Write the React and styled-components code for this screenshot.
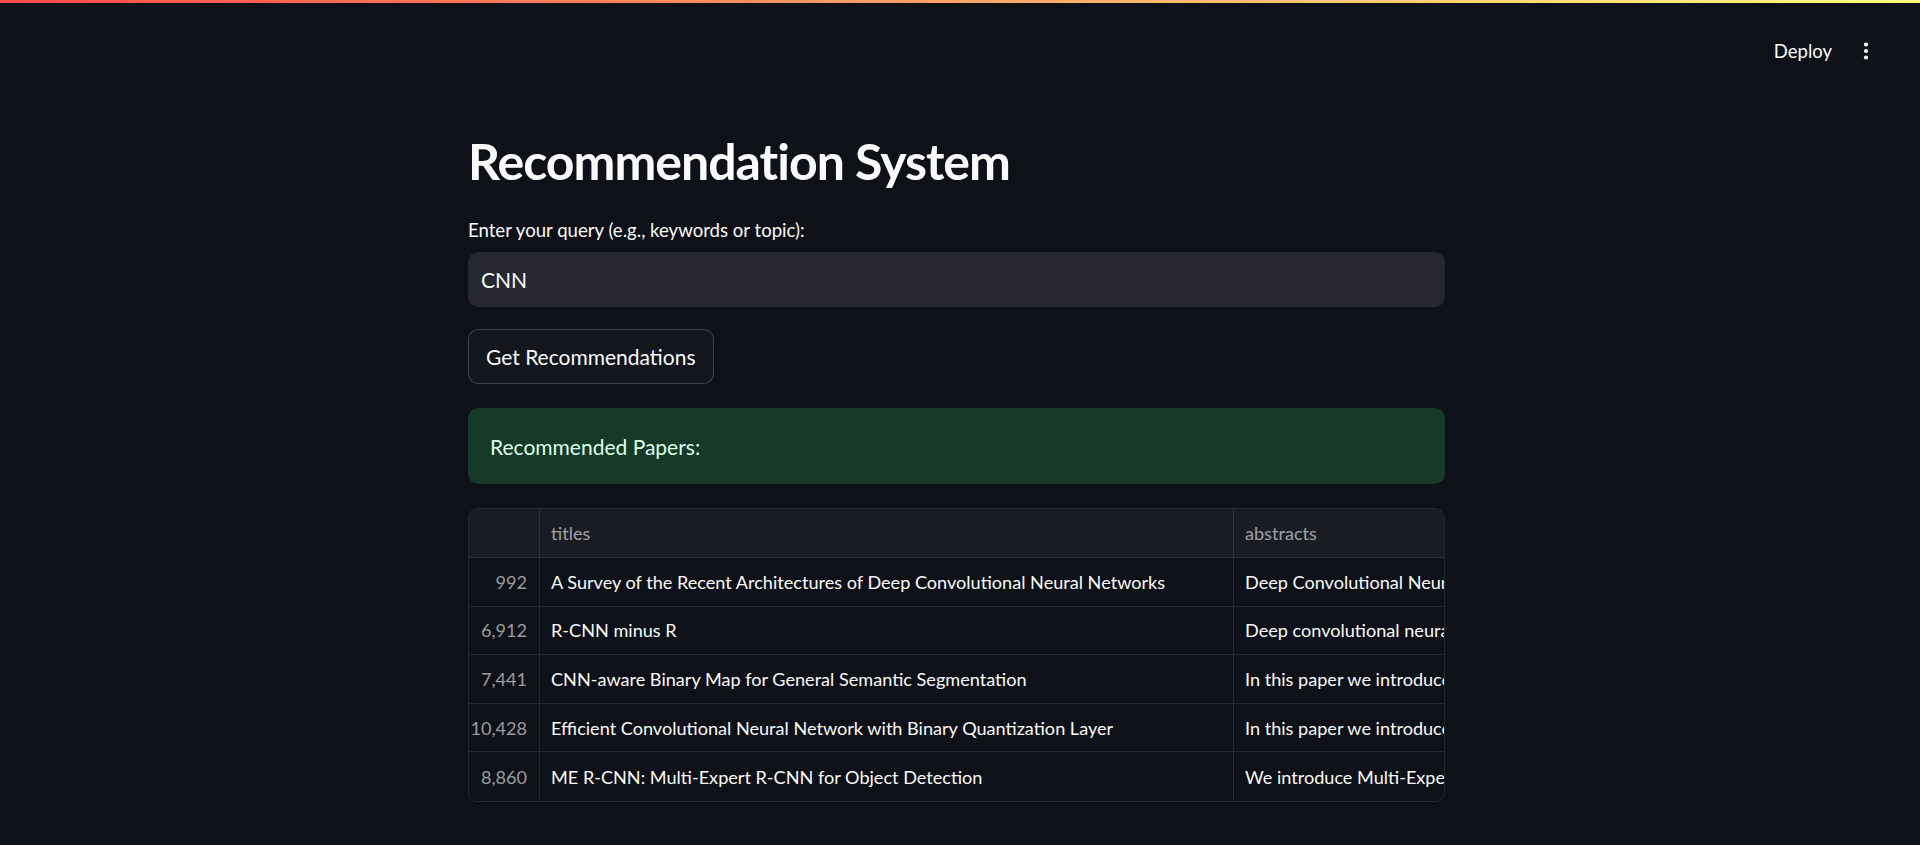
import React from "react";
import styled, { createGlobalStyle } from "styled-components";

const Global = createGlobalStyle`
  html, body { margin: 0; padding: 0; background: #0e1117; }
  body { font-family: Lato, "Noto Sans", sans-serif; color: #fafafa; }
  * { box-sizing: border-box; }
`;

const Page = styled.div`
  min-height: 845px;
  background: #0e1117;
  display: flex;
  flex-direction: column;
`;

const Decoration = styled.div`
  height: 3px;
  background: linear-gradient(90deg, rgb(255, 75, 75), rgb(255, 253, 128));
`;

const TopBar = styled.header`
  height: 120px;
  display: flex;
  align-items: flex-start;
  justify-content: flex-end;
  padding: 35px 44px 0 0;
  gap: 24px;
`;

const DeployButton = styled.button`
  background: transparent;
  border: none;
  color: #fafafa;
  font-family: Lato, sans-serif;
  font-size: 18.5px;
  padding: 0;
  height: 26px;
  line-height: 26px;
`;

const MenuButton = styled.button`
  background: transparent;
  border: none;
  padding: 0;
  width: 20px;
  height: 26px;
  display: flex;
  align-items: center;
  justify-content: center;
`;

const Main = styled.main`
  width: 977px;
  margin-left: calc(50% - 492px);
  display: flex;
  flex-direction: column;
`;

const Title = styled.h1`
  margin: 0;
  font-family: Lato, sans-serif;
  font-weight: 700;
  font-size: 50px;
  letter-spacing: -1px;
  line-height: 76px;
  color: #fafafa;
`;

const Label = styled.label`
  margin-top: 18px;
  font-size: 18.6px;
  line-height: 26px;
  color: #fafafa;
`;

const Input = styled.div`
  margin-top: 9px;
  height: 55px;
  border-radius: 10px;
  background: #262730;
  display: flex;
  align-items: center;
  padding: 0 13px;
  font-size: 21px;
  color: #fafafa;
`;

const Button = styled.button`
  margin-top: 22px;
  align-self: flex-start;
  height: 55px;
  padding: 0 17px;
  border-radius: 10px;
  border: 1px solid rgba(250, 250, 250, 0.2);
  background: #13161d;
  color: #fafafa;
  font-family: Lato, sans-serif;
  font-size: 21px;
`;

const Alert = styled.div`
  margin-top: 24px;
  height: 76px;
  border-radius: 10px;
  background: #173928;
  color: rgb(223, 253, 233);
  display: flex;
  align-items: center;
  padding: 0 22px;
  font-size: 21px;
`;

const Table = styled.div`
  margin-top: 24px;
  border: 1px solid rgba(250, 250, 250, 0.1);
  border-radius: 10px;
  overflow: hidden;
  display: grid;
  grid-template-columns: 71px 694px 600px;
  font-size: 18.1px;
`;

const Cell = styled.div`
  height: ${(p) => (p.$head ? "49px" : "48.6px")};
  display: flex;
  align-items: center;
  justify-content: ${(p) => (p.$index ? "flex-end" : "flex-start")};
  padding: 0 12px 0 11px;
  background: ${(p) => (p.$head ? "#1a1c24" : "#0e1117")};
  color: ${(p) => (p.$head || p.$index ? "rgba(250,250,250,0.6)" : "#fafafa")};
  border-right: 1px solid rgba(250, 250, 250, 0.1);
  border-bottom: ${(p) => (p.$last ? "none" : "1px solid rgba(250, 250, 250, 0.1)")};
  white-space: nowrap;
  overflow: hidden;
`;

const rows = [
  ["992", "A Survey of the Recent Architectures of Deep Convolutional Neural Networks", "Deep Convolutional Neural Networks (CNNs) are a special type of Neural Networks"],
  ["6,912", "R-CNN minus R", "Deep convolutional neural networks (CNNs) have had a major impact"],
  ["7,441", "CNN-aware Binary Map for General Semantic Segmentation", "In this paper we introduce a novel method for general semantic segmentation"],
  ["10,428", "Efficient Convolutional Neural Network with Binary Quantization Layer", "In this paper we introduce a novel method for segmentation"],
  ["8,860", "ME R-CNN: Multi-Expert R-CNN for Object Detection", "We introduce Multi-Expert Region-based CNN (ME R-CNN)"],
];

export default function App() {
  return (
    <Page>
      <Global />
      <Decoration />
      <TopBar>
        <DeployButton>Deploy</DeployButton>
        <MenuButton aria-label="menu">
          <svg width="6" height="18" viewBox="0 0 6 18">
            <circle cx="3" cy="2.5" r="2.1" fill="#fafafa" />
            <circle cx="3" cy="9" r="2.1" fill="#fafafa" />
            <circle cx="3" cy="15.5" r="2.1" fill="#fafafa" />
          </svg>
        </MenuButton>
      </TopBar>
      <Main>
        <Title>Recommendation System</Title>
        <Label>Enter your query (e.g., keywords or topic):</Label>
        <Input>CNN</Input>
        <Button>Get Recommendations</Button>
        <Alert>Recommended Papers:</Alert>
        <Table>
          <Cell $head />
          <Cell $head>titles</Cell>
          <Cell $head>abstracts</Cell>
          {rows.map((r, i) => (
            <React.Fragment key={r[0]}>
              <Cell $index $last={i === rows.length - 1}>{r[0]}</Cell>
              <Cell $last={i === rows.length - 1}>{r[1]}</Cell>
              <Cell $last={i === rows.length - 1}>{r[2]}</Cell>
            </React.Fragment>
          ))}
        </Table>
      </Main>
    </Page>
  );
}
